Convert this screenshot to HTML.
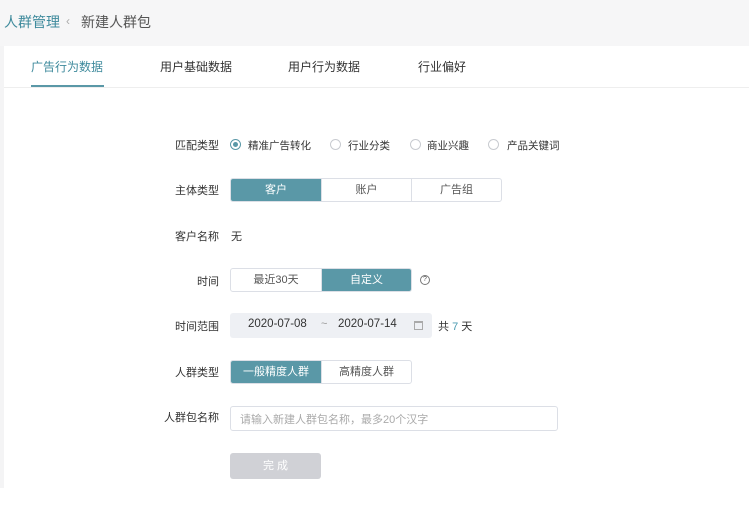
<!DOCTYPE html>
<html><head><meta charset="utf-8"><style>
*{box-sizing:border-box;margin:0;padding:0}
body{width:749px;height:526px;background:#fff;font-family:"Liberation Sans","Noto Sans CJK SC",sans-serif;position:relative;overflow:hidden;color:#333}
.top{position:absolute;left:0;top:0;width:749px;height:46px;background:#f6f6f7}
.strip{position:absolute;left:0;top:46px;width:4px;height:442px;background:#f4f4f5}
.bc{position:absolute;top:12px;font-size:14px}
.tab{position:absolute;top:58px;font-size:12px;color:#333}
.a{position:absolute}
.lbl{position:absolute;right:530px;font-size:11px;color:#333;text-align:right;white-space:nowrap}
.t{font-size:11px;color:#333;position:absolute;white-space:nowrap}
.r{font-size:10.5px}
.seg{position:absolute;display:flex;border:1px solid #dcdfe6;border-radius:3px;overflow:hidden;height:24px}
.seg div{width:90px;text-align:center;font-size:11px;line-height:22px;color:#555;border-left:1px solid #dcdfe6}
.seg div:first-child{border-left:none}
.seg .on{background:#5a98a7;color:#fff}
.rd{position:absolute;width:11px;height:11px;border:1px solid #c8cbd0;border-radius:50%}
</style></head><body>
<div class="top"></div><div class="strip"></div>
<div class="bc" style="left:4px;color:#3e8a9c">人群管理</div>
<div class="bc" style="left:66px;color:#aaa;font-size:12px;top:14px">‹</div>
<div class="bc" style="left:81px;color:#555">新建人群包</div>
<div class="tab" style="left:31px;color:#3e8a9c">广告行为数据</div>
<div class="tab" style="left:160px">用户基础数据</div>
<div class="tab" style="left:288px">用户行为数据</div>
<div class="tab" style="left:418px">行业偏好</div>
<div class="a" style="left:4px;top:87px;width:745px;height:1px;background:#eee"></div>
<div class="a" style="left:31px;top:85px;width:73px;height:2px;background:#5a98a7"></div>

<div class="lbl" style="top:137px">匹配类型</div>
<div class="rd" style="left:230px;top:139px;border-color:#5a98a7"><div style="position:absolute;left:2px;top:2px;width:5px;height:5px;border-radius:50%;background:#5a98a7"></div></div>
<div class="t r" style="left:248px;top:138px">精准广告转化</div>
<div class="rd" style="left:330px;top:139px"></div><div class="t r" style="left:348px;top:138px">行业分类</div>
<div class="rd" style="left:410px;top:139px"></div><div class="t r" style="left:427px;top:138px">商业兴趣</div>
<div class="rd" style="left:488px;top:139px"></div><div class="t r" style="left:507px;top:138px">产品关键词</div>

<div class="lbl" style="top:182px">主体类型</div>
<div class="seg" style="left:230px;top:178px"><div class="on">客户</div><div>账户</div><div>广告组</div></div>

<div class="lbl" style="top:228px">客户名称</div>
<div class="t" style="left:231px;top:228px">无</div>

<div class="lbl" style="top:273px">时间</div>
<div class="seg" style="left:230px;top:268px"><div>最近30天</div><div class="on">自定义</div></div>
<div class="a" style="left:420px;top:275px;width:10px;height:10px;border:1px solid #777;border-radius:50%;font-size:7px;line-height:8px;text-align:center;color:#555">?</div>

<div class="lbl" style="top:318px">时间范围</div>
<div class="a" style="left:230px;top:313px;width:202px;height:25px;background:#eef0f4;border-radius:3px"></div>
<div class="t" style="left:248px;top:318px;font-size:11.5px">2020-07-08</div>
<div class="t" style="left:321px;top:318px;color:#999">~</div>
<div class="t" style="left:338px;top:318px;font-size:11.5px">2020-07-14</div>
<div class="a" style="left:414px;top:321px;width:9px;height:9px;border:1px solid #aaa;border-top-width:2px"></div>
<div class="t" style="left:438px;top:318px">共 <span style="color:#4a9ab0">7</span> 天</div>

<div class="lbl" style="top:364px">人群类型</div>
<div class="seg" style="left:230px;top:360px"><div class="on">一般精度人群</div><div>高精度人群</div></div>

<div class="lbl" style="top:409px">人群包名称</div>
<div class="a" style="left:230px;top:406px;width:328px;height:25px;border:1px solid #dcdfe6;border-radius:3px"></div>
<div class="t" style="left:240px;top:411px;color:#aaa">请输入新建人群包名称，最多20个汉字</div>

<div class="a" style="left:230px;top:453px;width:91px;height:26px;background:#d0d1d6;border-radius:3px;color:#fff;font-size:11px;text-align:center;line-height:26px">完 成</div>
</body></html>
